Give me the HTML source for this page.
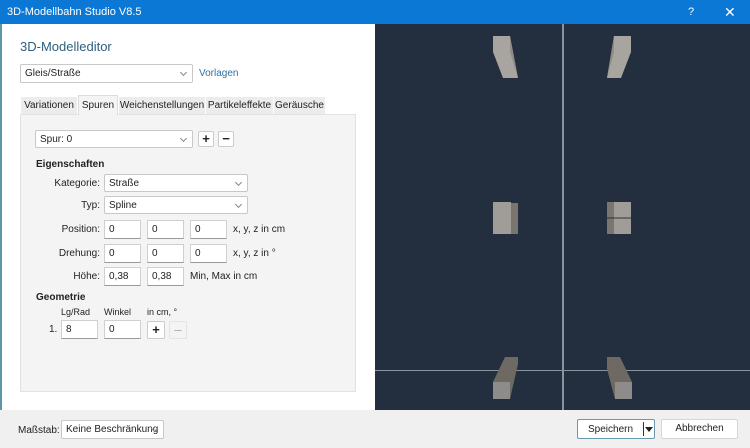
<!DOCTYPE html>
<html><head><meta charset="utf-8"><style>
*{box-sizing:border-box;margin:0;padding:0}
body{width:750px;height:448px;overflow:hidden;font-family:"Liberation Sans",sans-serif;font-size:10px;color:#222;background:#fff;position:relative}
.a{position:absolute}
.title{left:0;top:0;width:750px;height:24px;background:#0b78d6;color:#fff;font-size:11px;line-height:24px;padding-left:7px}
.sel{position:absolute;background:#fff;border:1px solid #c8c8c8;border-radius:2px;height:19px;line-height:17px;padding-left:4px}
.sel:after{content:"";position:absolute;right:6px;top:5px;width:4px;height:4px;border-right:1px solid #888;border-bottom:1px solid #888;transform:rotate(45deg)}
.inp{position:absolute;background:#fff;border:1px solid #d0d0d0;border-bottom:1px solid #999;height:19px;line-height:17px;padding-left:4px;width:37px}
.lbl{position:absolute;text-align:right;line-height:19px}
.btn{position:absolute;width:16px;height:16px;border:1px solid #ccc;border-radius:2px;background:#fff;text-align:center;line-height:14px;font-weight:bold;font-size:13px}
.tab{position:absolute;top:97px;height:17px;line-height:17px;background:#ececec;text-align:center;font-size:10px;white-space:nowrap}
</style></head><body>
<div class="a title">3D-Modellbahn Studio V8.5<span class="a" style="left:688px;top:0">?</span><span class="a" style="left:724px;top:0;font-size:14px">✕</span></div>
<div class="a" style="left:0;top:24px;width:2px;height:424px;background:#5d96a8"></div>
<div class="a" style="left:20px;top:39px;font-size:13px;color:#2f5f7f">3D-Modelleditor</div>
<div class="sel" style="left:20px;top:64px;width:173px;height:19px">Gleis/Straße</div>
<div class="a" style="left:199px;top:68px;color:#2f6f9f">Vorlagen</div>
<div class="a" style="left:20px;top:114px;width:336px;height:278px;background:#f4f4f4;border:1px solid #e2e2e2"></div>
<div class="tab" style="left:21px;width:56px">Variationen</div>
<div class="tab" style="left:78px;width:40px;top:95px;height:20px;line-height:19px;background:#f4f4f4;border:1px solid #ddd;border-bottom:none">Spuren</div>
<div class="tab" style="left:119px;width:86px">Weichenstellungen</div>
<div class="tab" style="left:206px;width:67px">Partikeleffekte</div>
<div class="tab" style="left:274px;width:51px">Geräusche</div>
<div class="sel" style="left:35px;top:130px;width:158px;height:18px">Spur: 0</div>
<div class="btn" style="left:198px;top:131px">+</div>
<div class="btn" style="left:218px;top:131px">−</div>
<div class="a" style="left:36px;top:159px;font-weight:bold">Eigenschaften</div>
<div class="lbl" style="left:30px;width:70px;top:174px">Kategorie:</div>
<div class="sel" style="left:104px;top:174px;width:144px;height:18px">Straße</div>
<div class="lbl" style="left:30px;width:70px;top:196px">Typ:</div>
<div class="sel" style="left:104px;top:196px;width:144px;height:18px">Spline</div>
<div class="lbl" style="left:30px;width:70px;top:220px">Position:</div>
<div class="inp" style="left:104px;top:220px">0</div><div class="inp" style="left:147px;top:220px">0</div><div class="inp" style="left:190px;top:220px">0</div>
<div class="a" style="left:233px;top:224px">x, y, z in cm</div>
<div class="lbl" style="left:30px;width:70px;top:244px">Drehung:</div>
<div class="inp" style="left:104px;top:244px">0</div><div class="inp" style="left:147px;top:244px">0</div><div class="inp" style="left:190px;top:244px">0</div>
<div class="a" style="left:233px;top:248px">x, y, z in °</div>
<div class="lbl" style="left:30px;width:70px;top:267px">Höhe:</div>
<div class="inp" style="left:104px;top:267px">0,38</div><div class="inp" style="left:147px;top:267px">0,38</div>
<div class="a" style="left:190px;top:271px">Min, Max in cm</div>
<div class="a" style="left:36px;top:292px;font-weight:bold">Geometrie</div>
<div class="a" style="left:61px;top:307px;font-size:9px">Lg/Rad</div>
<div class="a" style="left:104px;top:307px;font-size:9px">Winkel</div>
<div class="a" style="left:147px;top:307px;font-size:9px">in cm, °</div>
<div class="a" style="left:49px;top:324px">1.</div>
<div class="inp" style="left:61px;top:320px">8</div><div class="inp" style="left:104px;top:320px">0</div>
<div class="btn" style="left:147px;top:321px;width:18px;height:18px;line-height:16px">+</div>
<div class="btn" style="left:169px;top:321px;width:18px;height:18px;line-height:16px;color:#aaa;border-color:#e4e4e4;background:#f4f4f4;font-weight:normal">–</div>
<div class="a" style="left:375px;top:24px;width:375px;height:386px;background:#232f3e"></div>
<div class="a" style="left:562px;top:24px;width:2px;height:386px;background:#8a949e"></div>
<div class="a" style="left:375px;top:370px;width:375px;height:1px;background:#8a949e"></div>
<svg class="a" style="left:375px;top:24px" width="375" height="386">
<polygon points="118,12 135,12 143,54 128,54 118,28" fill="#a8a49f"/><polygon points="135,12 135,28 143,54" fill="#8f8b86"/>
<polygon points="239,12 256,12 256,28 246,54 232,54" fill="#a8a49f"/><polygon points="239,12 239,28 232,54" fill="#8f8b86"/>
<rect x="118" y="178" width="18" height="32" fill="#a09d99"/><rect x="136" y="179" width="7" height="31" fill="#7a756e"/>
<rect x="232" y="178" width="7" height="32" fill="#7a756e"/><rect x="239" y="178" width="17" height="32" fill="#a09d99"/><line x1="232" y1="194" x2="256" y2="194" stroke="#333" stroke-width="1"/>
<polygon points="130,333 143,333 143,340 135,375 118,375 118,358" fill="#6e6963"/><rect x="118" y="358" width="17" height="17" fill="#8e8c8a"/>
<polygon points="232,333 245,333 257,358 257,375 240,375 232,345" fill="#6e6963"/><rect x="240" y="358" width="17" height="17" fill="#8e8c8a"/>
</svg>
<div class="a" style="left:0;top:410px;width:750px;height:38px;background:#f0f0f0"></div>
<div class="a" style="left:18px;top:425px">Maßstab:</div>
<div class="sel" style="left:61px;top:420px;width:103px;height:19px;white-space:nowrap;overflow:hidden;padding-right:14px">Keine Beschränkung</div>
<div class="a" style="left:577px;top:419px;width:78px;height:20px;background:#fff;border:1px solid #6a9ab0;border-radius:2px"><span class="a" style="left:10px;top:4px">Speichern</span><span class="a" style="left:65px;top:2px;width:1px;height:14px;background:#333"></span><span class="a" style="left:67px;top:7px;border-left:4px solid transparent;border-right:4px solid transparent;border-top:5px solid #222"></span></div>
<div class="a" style="left:661px;top:419px;width:77px;height:20px;background:#fff;border:1px solid #d6d6d6;border-radius:2px;text-align:center;line-height:18px">Abbrechen</div>
</body></html>
